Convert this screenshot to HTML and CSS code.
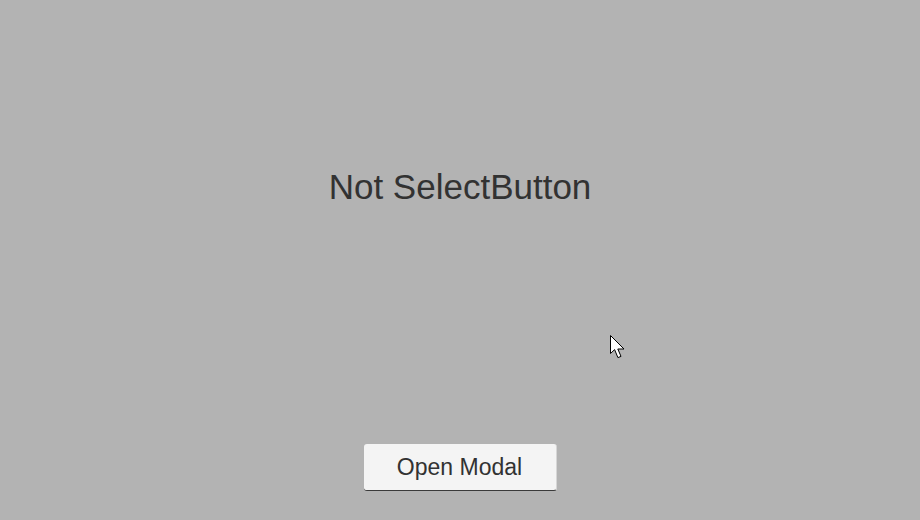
FILE: index.html
```html
<!DOCTYPE html>
<html>
<head>
<meta charset="utf-8">
<link rel="stylesheet" href="styles.css">
</head>
<body>
<div class="screen">
  <h1 class="title">Not SelectButton</h1>
  <button class="btn">Open Modal</button>
  <svg class="cursor" width="18" height="28" viewBox="0 0 18 28">
    <path d="M0.5 0.5 L0.5 18.5 L4.6 14.6 L7.9 22.6 L11 21.4 L7.8 14 L14 14 Z" fill="#fff" stroke="#000" stroke-width="1" stroke-linejoin="miter"/>
  </svg>
</div>
</body>
</html>
```
FILE: styles.css
```css
* { box-sizing: border-box; }
html, body { margin: 0; padding: 0; }
body {
  background: #b3b3b3;
  font-family: "Liberation Sans", Arial, sans-serif;
}
.screen {
  position: relative;
  width: 920px;
  height: 520px;
  display: flex;
  flex-direction: column;
  align-items: center;
}
.title {
  margin: 167px 0 0 0;
  font-size: 35px;
  line-height: 40px;
  font-weight: normal;
  color: #323232;
}
.btn {
  margin-top: auto;
  margin-bottom: 29px;
  width: 193px;
  height: 47px;
  padding: 0 0 1px 0;
  background: #f4f4f4;
  border: none;
  border-right: 1px solid #d6d6d6;
  border-bottom: 1px solid #3a3a3a;
  border-radius: 3px;
  font-family: "Liberation Sans", Arial, sans-serif;
  font-size: 23px;
  line-height: 44px;
  color: #323232;
  text-align: center;
}
.cursor {
  position: absolute;
  left: 610px;
  top: 335px;
}
```
